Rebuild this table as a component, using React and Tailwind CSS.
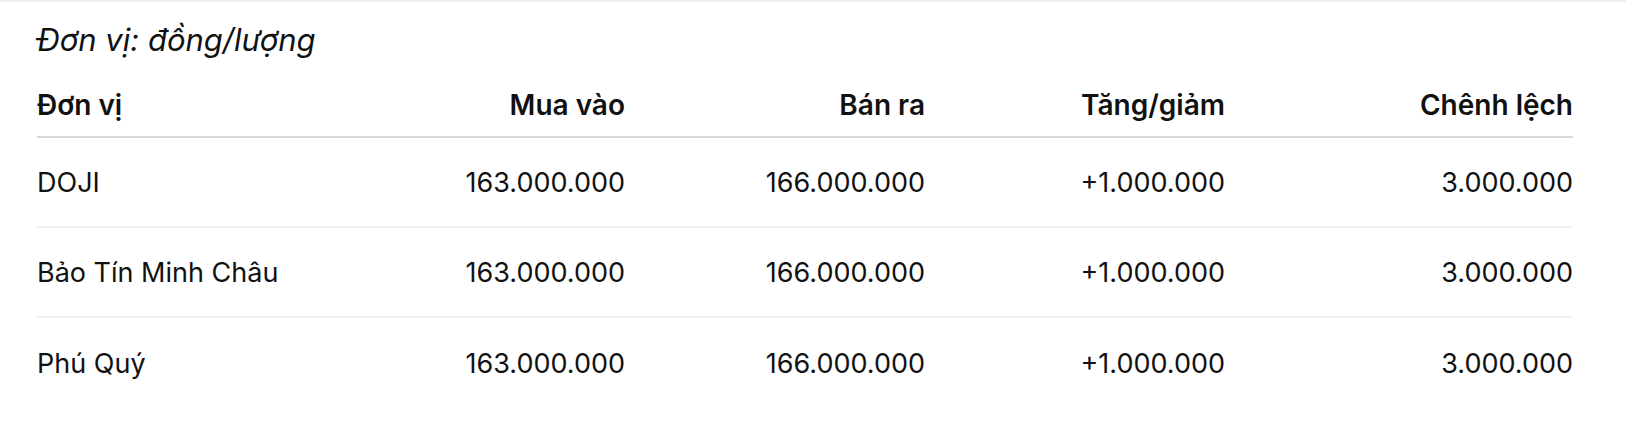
const rows = [
  { name: "DOJI", buy: "163.000.000", sell: "166.000.000", change: "+1.000.000", spread: "3.000.000" },
  { name: "Bảo Tín Minh Châu", buy: "163.000.000", sell: "166.000.000", change: "+1.000.000", spread: "3.000.000" },
  { name: "Phú Quý", buy: "163.000.000", sell: "166.000.000", change: "+1.000.000", spread: "3.000.000" }
];

const cols = "grid grid-cols-[1fr_300px_300px_300px_348px]";

const App = () => {
  return (
    <div className="min-h-[434px] w-full bg-white text-[#111111]" style={{ fontFamily: "Inter, 'Noto Sans', sans-serif" }}>
      <div className="h-[2px] w-full bg-[#eeeeee]" />
      <div className="pl-[37px] pr-[53px]">
        <p className="flex h-[76px] items-center text-[31px] italic text-[#111111]">Đơn vị: đồng/lượng</p>

        <div className={`${cols} h-[60px] items-center border-b-2 border-[#d9d9d9] pb-[5px] text-[28px] font-semibold`}>
          <div>Đơn vị</div>
          <div className="text-right">Mua vào</div>
          <div className="text-right">Bán ra</div>
          <div className="text-right">Tăng/giảm</div>
          <div className="text-right">Chênh lệch</div>
        </div>

        {rows.map((row, i) => (
          <div
            key={row.name}
            className={`${cols} h-[90px] items-center pt-[3px] text-[27px] ${i < rows.length - 1 ? "border-b-2 border-[#f1f1f1]" : ""}`}
          >
            <div>{row.name}</div>
            <div className="text-right">{row.buy}</div>
            <div className="text-right">{row.sell}</div>
            <div className="text-right">{row.change}</div>
            <div className="text-right">{row.spread}</div>
          </div>
        ))}
      </div>
    </div>
  );
};

export default App;
